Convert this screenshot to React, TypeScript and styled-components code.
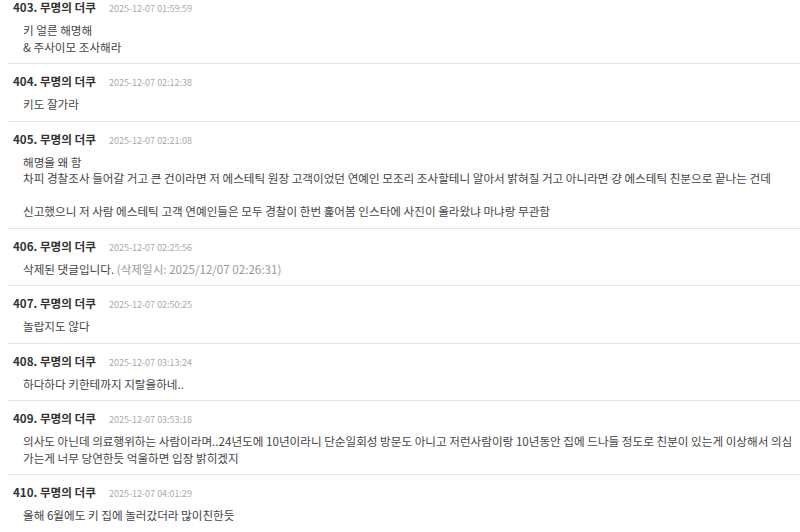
import React from "react";
import styled, { createGlobalStyle } from "styled-components";

const GlobalStyle = createGlobalStyle`
  body {
    margin: 0;
    background: #fff;
    font-family: "Noto Sans CJK KR", "Noto Sans", sans-serif;
    overflow: hidden;
  }
`;

const CommentList = styled.ul`
  list-style: none;
  margin: -10px 0 0 8px;
  padding: 0;
`;

const CommentItem = styled.li<{ $last?: boolean }>`
  padding: 10px 0 8px;
  border-bottom: ${(p) => (p.$last ? "none" : "1px solid #e6e6e6")};
`;

const CommentHeader = styled.div`
  display: flex;
  align-items: baseline;
  padding-left: 5px;
  height: 14px;
  line-height: 14px;
`;

const Author = styled.span`
  font-size: 11.6px;
  font-weight: 700;
  color: #333;
`;

const DateText = styled.span`
  margin-left: 13px;
  font-size: 9px;
  color: #aaa;
`;

const Body = styled.div`
  margin-top: 8px;
  padding-left: 15px;
  font-size: 11.6px;
  line-height: 16.5px;
  color: #444;
  white-space: pre-line;
`;

const DeletedNote = styled.span`
  color: #999;
`;

type Comment = {
  no: number;
  date: string;
  text: string;
  deletedAt?: string;
};

const comments: Comment[] = [
  { no: 403, date: "2025-12-07 01:59:59", text: "키 얼른 해명해\n& 주사이모 조사해라" },
  { no: 404, date: "2025-12-07 02:12:38", text: "키도 잘가라" },
  {
    no: 405,
    date: "2025-12-07 02:21:08",
    text:
      "해명을 왜 함\n차피 경찰조사 들어갈 거고 큰 건이라면 저 에스테틱 원장 고객이었던 연예인 모조리 조사할테니 알아서 밝혀질 거고 아니라면 걍 에스테틱 친분으로 끝나는 건데\n\n신고했으니 저 사람 에스테틱 고객 연예인들은 모두 경찰이 한번 훑어봄 인스타에 사진이 올라왔냐 마냐랑 무관함",
  },
  {
    no: 406,
    date: "2025-12-07 02:25:56",
    text: "삭제된 댓글입니다.",
    deletedAt: "2025/12/07 02:26:31",
  },
  { no: 407, date: "2025-12-07 02:50:25", text: "놀랍지도 않다" },
  { no: 408, date: "2025-12-07 03:13:24", text: "하다하다 키한테까지 지랄을하네.." },
  {
    no: 409,
    date: "2025-12-07 03:53:18",
    text:
      "의사도 아닌데 의료행위하는 사람이라며..24년도에 10년이라니 단순일회성 방문도 아니고 저런사람이랑 10년동안 집에 드나들 정도로 친분이 있는게 이상해서 의심가는게 너무 당연한듯 억울하면 입장 밝히겠지",
  },
  { no: 410, date: "2025-12-07 04:01:29", text: "올해 6월에도 키 집에 놀러갔더라 많이친한듯" },
];

const App: React.FC = () => {
  return (
    <>
      <GlobalStyle />
      <CommentList>
        {comments.map((c, i) => (
          <CommentItem key={c.no} $last={i === comments.length - 1}>
            <CommentHeader>
              <Author>{c.no}. 무명의 더쿠</Author>
              <DateText>{c.date}</DateText>
            </CommentHeader>
            <Body>
              {c.text}
              {c.deletedAt && <DeletedNote> (삭제일시: {c.deletedAt})</DeletedNote>}
            </Body>
          </CommentItem>
        ))}
      </CommentList>
    </>
  );
};

export default App;
